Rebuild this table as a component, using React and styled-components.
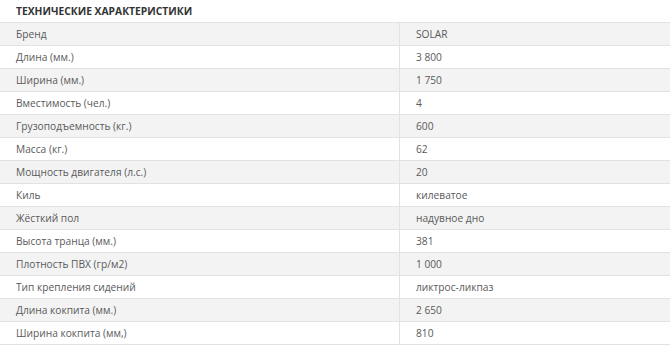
import styled, { createGlobalStyle } from 'styled-components'

const GlobalStyle = createGlobalStyle`
  html, body {
    margin: 0;
    padding: 0;
    background: #fff;
  }
  body {
    font-family: "Open Sans", "Liberation Sans", sans-serif;
  }
`

const Wrapper = styled.div`
  width: 670px;
  height: 346px;
  overflow: hidden;
  background: #fff;
`

const Title = styled.div`
  height: 22px;
  line-height: 22px;
  padding-left: 16px;
  font-size: 10.3px;
  font-weight: 700;
  color: #333;
  text-transform: uppercase;
`

const Table = styled.div`
  display: grid;
  grid-template-columns: 399px 1fr;
  border-bottom: 1px solid #e2e2e2;
`

const Row = styled.div`
  display: contents;
  & > div {
    background: ${({ $shaded }) => ($shaded ? '#f3f3f3' : '#fff')};
  }
`

const Cell = styled.div`
  height: 22px;
  line-height: 22px;
  border-top: 1px solid #e2e2e2;
  font-size: 10.2px;
  color: #5a5a5a;
  padding-left: 16px;
  border-left: ${({ $value }) => ($value ? '1px solid #e2e2e2' : 'none')};
  white-space: nowrap;
`

const specs = [
  ['Бренд', 'SOLAR'],
  ['Длина (мм.)', '3 800'],
  ['Ширина (мм.)', '1 750'],
  ['Вместимость (чел.)', '4'],
  ['Грузоподъемность (кг.)', '600'],
  ['Масса (кг.)', '62'],
  ['Мощность двигателя (л.с.)', '20'],
  ['Киль', 'килеватое'],
  ['Жёсткий пол', 'надувное дно'],
  ['Высота транца (мм.)', '381'],
  ['Плотность ПВХ (гр/м2)', '1 000'],
  ['Тип крепления сидений', 'ликтрос-ликпаз'],
  ['Длина кокпита (мм.)', '2 650'],
  ['Ширина кокпита (мм,)', '810'],
]

const App = () => {
  return (
    <Wrapper>
      <GlobalStyle />
      <Title>Технические характеристики</Title>
      <Table>
        {specs.map(([name, value], i) => (
          <Row key={name} $shaded={i % 2 === 0}>
            <Cell>{name}</Cell>
            <Cell $value>{value}</Cell>
          </Row>
        ))}
      </Table>
    </Wrapper>
  )
}

export default App
